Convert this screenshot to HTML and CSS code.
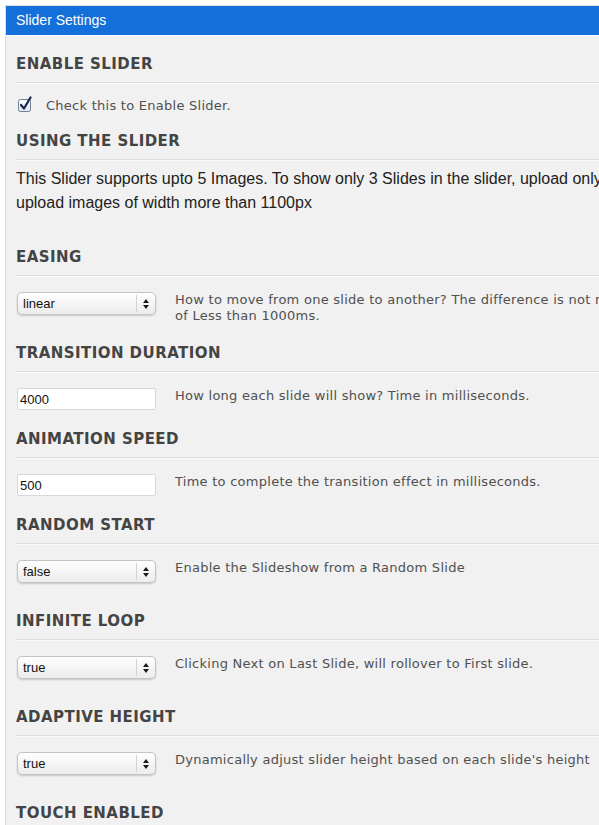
FILE: index.html
```html
<!DOCTYPE html>
<html lang="en">
<head>
    <meta charset="UTF-8">
    <meta name="viewport" content="width=device-width, initial-scale=1.0">
    <title>Slider Settings</title>
    <link rel="stylesheet" href="styles.css">
</head>
<body>
    <div class="panel">
        <div class="panel-title">Slider Settings</div>
        <div class="panel-body">

            <h3 class="option-title">ENABLE SLIDER</h3>
            <label class="check-row">
                <span class="checkbox">
                    <svg width="16" height="16" viewBox="0 0 16 16">
                        <defs>
                            <linearGradient id="boxfill" x1="0" y1="0" x2="0" y2="1">
                                <stop offset="0" stop-color="#ffffff"/>
                                <stop offset="1" stop-color="#dfe4ec"/>
                            </linearGradient>
                        </defs>
                        <rect x="0.5" y="3.5" width="12" height="12" rx="2" fill="url(#boxfill)" stroke="#6f7f96"/>
                        <path d="M3 9 L6 12.5 L12.5 1.5" fill="none" stroke="#1b2650" stroke-width="2.2" stroke-linecap="round" stroke-linejoin="round"/>
                    </svg>
                </span>
                Check this to Enable Slider.
            </label>

            <h3 class="option-title">USING THE SLIDER</h3>
            <p class="note">This Slider supports upto 5 Images. To show only 3 Slides in the slider, upload only 3 images. For best results,<br>upload images of width more than 1100px</p>

            <h3 class="option-title">EASING</h3>
            <div class="option-row">
                <div class="select-wrap">
                    <select><option>linear</option></select>
                    <span class="select-arrows"><svg width="6" height="10" viewBox="0 0 6 10"><path d="M0 4 L3 0 L6 4 Z M0 6 L3 10 L6 6 Z" fill="#1a1a1a"/></svg></span>
                </div>
                <div class="desc">How to move from one slide to another? The difference is not really noticeable for transition speeds<br>of Less than 1000ms.</div>
            </div>

            <h3 class="option-title">TRANSITION DURATION</h3>
            <div class="option-row">
                <input type="text" class="text-input" value="4000">
                <div class="desc">How long each slide will show? Time in milliseconds.</div>
            </div>

            <h3 class="option-title">ANIMATION SPEED</h3>
            <div class="option-row">
                <input type="text" class="text-input" value="500">
                <div class="desc">Time to complete the transition effect in milliseconds.</div>
            </div>

            <h3 class="option-title">RANDOM START</h3>
            <div class="option-row">
                <div class="select-wrap">
                    <select><option>false</option></select>
                    <span class="select-arrows"><svg width="6" height="10" viewBox="0 0 6 10"><path d="M0 4 L3 0 L6 4 Z M0 6 L3 10 L6 6 Z" fill="#1a1a1a"/></svg></span>
                </div>
                <div class="desc">Enable the Slideshow from a Random Slide</div>
            </div>

            <h3 class="option-title">INFINITE LOOP</h3>
            <div class="option-row">
                <div class="select-wrap">
                    <select><option>true</option></select>
                    <span class="select-arrows"><svg width="6" height="10" viewBox="0 0 6 10"><path d="M0 4 L3 0 L6 4 Z M0 6 L3 10 L6 6 Z" fill="#1a1a1a"/></svg></span>
                </div>
                <div class="desc">Clicking Next on Last Slide, will rollover to First slide.</div>
            </div>

            <h3 class="option-title">ADAPTIVE HEIGHT</h3>
            <div class="option-row">
                <div class="select-wrap">
                    <select><option>true</option></select>
                    <span class="select-arrows"><svg width="6" height="10" viewBox="0 0 6 10"><path d="M0 4 L3 0 L6 4 Z M0 6 L3 10 L6 6 Z" fill="#1a1a1a"/></svg></span>
                </div>
                <div class="desc">Dynamically adjust slider height based on each slide's height</div>
            </div>

            <h3 class="option-title">TOUCH ENABLED</h3>

        </div>
    </div>
</body>
</html>
```

FILE: styles.css
```css
body {
    margin: 0;
    padding: 5px 0 0 5px;
    background-color: #ffffff;
    overflow: hidden;
    font-family: "DejaVu Sans", Verdana, sans-serif;
}
.panel {
    width: 1200px;
    border: 1px solid #dedede;
    background-color: #f1f1f1;
}
.panel-title {
    background-color: #136fd9;
    color: #ffffff;
    font-family: "Liberation Sans", Arial, sans-serif;
    font-size: 14px;
    line-height: 29px;
    padding-left: 10px;
    border-bottom: 1px solid #ffffff;
}
.panel-body {
    padding: 19px 0 0 10px;
}
.option-title {
    margin: 0;
    padding-bottom: 9px;
    font-size: 15px;
    line-height: 18px;
    font-weight: bold;
    letter-spacing: 0.45px;
    color: #444444;
    border-bottom: 1px solid #dcdcdc;
    box-shadow: 0 1px 0 #fafafa;
}
.check-row {
    display: flex;
    align-items: center;
    height: 13px;
    margin: 16px 0 20px;
    padding-left: 2px;
    font-size: 13px;
    letter-spacing: 0.26px;
    color: #505050;
}
.checkbox {
    display: flex;
    width: 16px;
    height: 16px;
    margin: -4px 12px 0 0;
}
.note {
    margin: 7px 0 33px;
    font-family: "Liberation Sans", Arial, sans-serif;
    font-size: 16px;
    line-height: 24px;
    color: #222222;
}
.option-row {
    display: flex;
    align-items: flex-start;
    margin: 16px 0 20px;
    padding-left: 1px;
}
.select-wrap {
    position: relative;
    flex-shrink: 0;
    width: 139px;
    height: 23px;
    margin-bottom: 9px;
}
.select-wrap select {
    appearance: none;
    -webkit-appearance: none;
    width: 100%;
    height: 100%;
    margin: 0;
    padding: 0 24px 0 5px;
    border: 1px solid #c4c4c4;
    border-radius: 5px;
    background: linear-gradient(#fefefe, #ececec);
    box-shadow: 0 1px 2px rgba(0, 0, 0, 0.18);
    font-family: "Liberation Sans", Arial, sans-serif;
    font-size: 13px;
    color: #111111;
}
.select-arrows {
    position: absolute;
    top: 3px;
    right: 1px;
    bottom: 3px;
    width: 18px;
    border-left: 1px solid #d2d2d2;
    display: flex;
    align-items: center;
    justify-content: center;
    pointer-events: none;
}
.text-input {
    flex-shrink: 0;
    box-sizing: border-box;
    width: 139px;
    height: 22px;
    margin: 0;
    padding: 0 2px;
    border: 1px solid #d8d8d8;
    border-radius: 2px;
    background-color: #ffffff;
    font-family: "Liberation Sans", Arial, sans-serif;
    font-size: 13px;
    color: #111111;
}
.desc {
    margin: 0 0 0 19px;
    font-size: 13px;
    line-height: 16px;
    letter-spacing: 0.26px;
    color: #505050;
    white-space: nowrap;
}
```
